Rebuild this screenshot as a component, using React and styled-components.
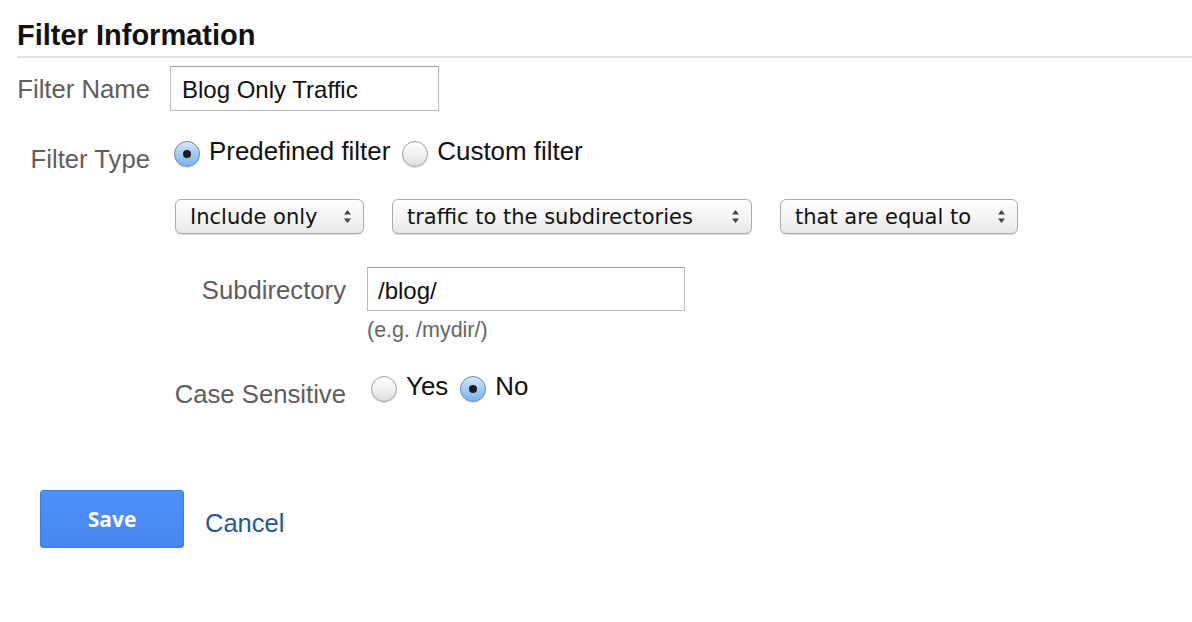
import React from 'react'
import styled, { createGlobalStyle } from 'styled-components'

const GlobalStyle = createGlobalStyle`
  body {
    margin: 0;
    background: #fff;
    font-family: "Liberation Sans", Arial, sans-serif;
  }
`

const Page = styled.div`
  padding-left: 17px;
`

const Title = styled.h2`
  margin: 0;
  padding: 18px 0 4px;
  font-size: 29px;
  line-height: 34px;
  font-weight: 700;
  color: #111;
  border-bottom: 2px solid #e3e3e3;
`

const Row = styled.div`
  display: flex;
  align-items: ${p => p.$align || 'flex-start'};
  margin-top: ${p => p.$top || 0}px;
  margin-left: ${p => p.$indent || 0}px;
`

const Label = styled.label`
  flex: none;
  width: ${p => p.$width}px;
  margin-right: ${p => p.$gap}px;
  padding-top: ${p => p.$drop || 0}px;
  text-align: right;
  color: #5e5e5e;
  font-size: 25.7px;
  line-height: 30px;
  white-space: nowrap;
`

const TextInput = styled.input`
  box-sizing: border-box;
  width: ${p => p.$width}px;
  height: ${p => p.$height}px;
  margin: 0;
  padding: 3px ${p => p.$pad}px 0;
  border: 1px solid #bcbcbc;
  border-top-color: #a0a0a0;
  border-radius: 0;
  background: #fff;
  font-family: inherit;
  font-size: 24px;
  color: #111;
  outline: none;
`

const RadioGroup = styled.div`
  display: flex;
  align-items: center;
  height: 30px;
  margin-left: 4px;
`

const Option = styled.label`
  display: flex;
  align-items: center;
  margin-right: 12px;
  font-size: 25.9px;
  line-height: 30px;
  color: #111;
  white-space: nowrap;
`

const Radio = styled.span`
  flex: none;
  box-sizing: border-box;
  width: 26px;
  height: 26px;
  margin: 6px 9px 0 0;
  border-radius: 50%;
  display: flex;
  align-items: center;
  justify-content: center;
  border: 1px solid ${p => (p.$checked ? '#6587b8' : '#a2a2a2')};
  background: ${p =>
    p.$checked
      ? 'linear-gradient(#d6e8fc, #a3caf3 50%, #78b1ee)'
      : 'linear-gradient(#ffffff, #f1f1f1 50%, #dedede)'};
  box-shadow: 0 1px 1px rgba(0, 0, 0, 0.12);

  &::after {
    content: '';
    display: ${p => (p.$checked ? 'block' : 'none')};
    width: 8px;
    height: 8px;
    border-radius: 50%;
    background: #1c1c1c;
  }
`

const SelectRow = styled.div`
  display: flex;
  gap: 28px;
  margin: ${p => p.$top}px 0 0 ${p => p.$indent}px;
`

const SelectBox = styled.div`
  box-sizing: border-box;
  width: ${p => p.$width}px;
  height: 35px;
  display: flex;
  align-items: center;
  justify-content: space-between;
  padding: 0 12px 0 14px;
  border: 1px solid #acacac;
  border-radius: 6px;
  background: linear-gradient(#ffffff, #f5f5f5 50%, #e8e8e8);
  box-shadow: 0 1px 1px rgba(0, 0, 0, 0.14);
  font-family: "DejaVu Sans", Verdana, sans-serif;
  font-size: 21px;
  color: #111;
  white-space: nowrap;
`

const Field = styled.div`
  display: flex;
  flex-direction: column;
`

const Hint = styled.div`
  margin-top: 7px;
  font-size: 21.5px;
  line-height: 25px;
  color: #666;
`

const ButtonRow = styled.div`
  display: flex;
  align-items: center;
  margin: 81px 0 0 23px;
`

const SaveButton = styled.button`
  width: 144px;
  height: 58px;
  margin: 0 21px 0 0;
  padding: 0;
  border: 1px solid #3b7de9;
  border-radius: 3px;
  background: linear-gradient(#4d90fe, #4787ed);
  color: #fff;
  font-family: "Open Sans", "DejaVu Sans", sans-serif;
  font-weight: 700;
  font-size: 21px;
  cursor: pointer;
`

const CancelLink = styled.a`
  margin-top: 8px;
  color: #1d5a97;
  font-size: 25.5px;
  line-height: 30px;
  text-decoration: none;
`

const Arrows = () => (
  <svg width="7" height="13" viewBox="0 0 7 13">
    <path d="M3.5 0 L7 4.6 H0 Z M3.5 13 L0 8.4 H7 Z" fill="#444" />
  </svg>
)

const Select = ({ width, children }) => (
  <SelectBox $width={width}>
    <span>{children}</span>
    <Arrows />
  </SelectBox>
)

const RadioOption = ({ checked, children }) => (
  <Option>
    <Radio $checked={checked} />
    {children}
  </Option>
)

export default function App() {
  return (
    <Page>
      <GlobalStyle />
      <Title>Filter Information</Title>

      <Row $align="baseline" $top={8}>
        <Label $width={133} $gap={20}>Filter Name</Label>
        <TextInput $width={269} $height={45} $pad={11} defaultValue="Blog Only Traffic" />
      </Row>

      <Row $top={25}>
        <Label $width={133} $gap={20} $drop={8}>Filter Type</Label>
        <RadioGroup>
          <RadioOption checked>Predefined filter</RadioOption>
          <RadioOption>Custom filter</RadioOption>
        </RadioGroup>
      </Row>

      <SelectRow $top={25} $indent={158}>
        <Select width={189}>Include only</Select>
        <Select width={360}>traffic to the subdirectories</Select>
        <Select width={238}>that are equal to</Select>
      </SelectRow>

      <Row $align="baseline" $top={33} $indent={153}>
        <Label $width={176} $gap={21}>Subdirectory</Label>
        <Field>
          <TextInput $width={318} $height={44} $pad={10} defaultValue="/blog/" />
          <Hint>(e.g. /mydir/)</Hint>
        </Field>
      </Row>

      <Row $top={28} $indent={153}>
        <Label $width={176} $gap={21} $drop={8}>Case Sensitive</Label>
        <RadioGroup>
          <RadioOption>Yes</RadioOption>
          <RadioOption checked>No</RadioOption>
        </RadioGroup>
      </Row>

      <ButtonRow>
        <SaveButton>Save</SaveButton>
        <CancelLink href="#">Cancel</CancelLink>
      </ButtonRow>
    </Page>
  )
}
